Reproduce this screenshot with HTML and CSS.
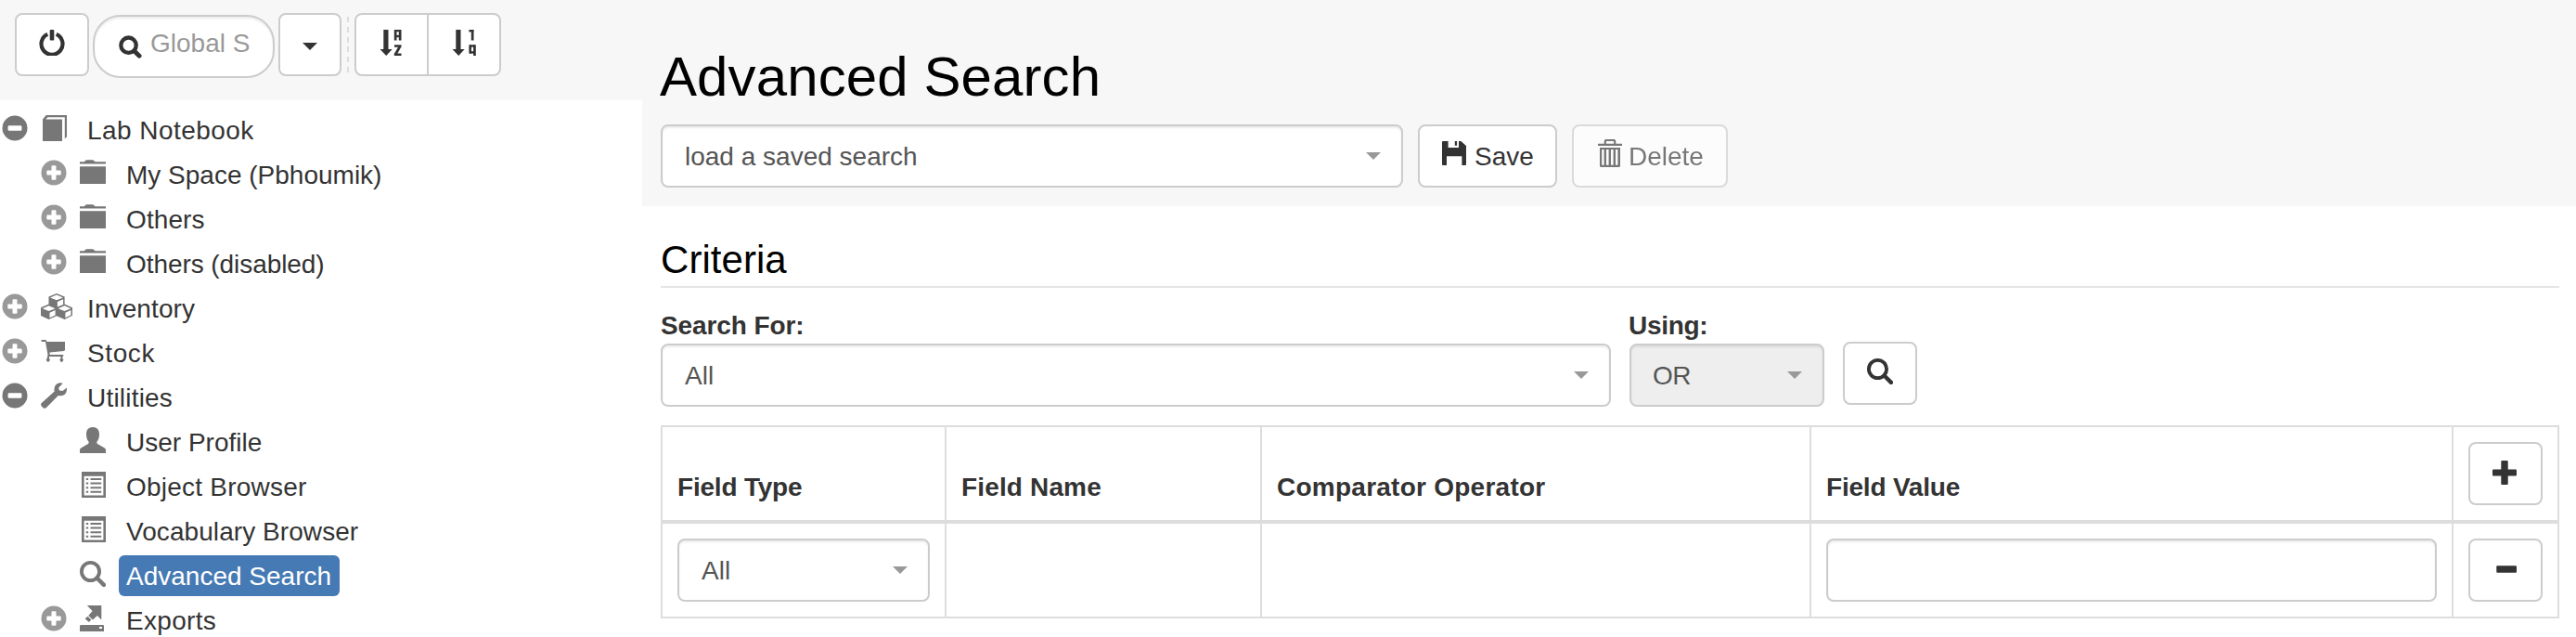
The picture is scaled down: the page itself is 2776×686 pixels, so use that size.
FILE: index.html
```html
<!DOCTYPE html>
<html lang="en">
<head>
<meta charset="utf-8">
<title>Advanced Search</title>
<link rel="stylesheet" href="styles.css">
</head>
<body>
<svg class="defs" aria-hidden="true">
  <symbol id="plus-circle" viewBox="0 0 28 28"><circle cx="14" cy="14" r="13.5" fill="#999"/><path d="M11.5 7.3q0-1 1-1h3q1 0 1 1v4.2h4.2q1 0 1 1v3q0 1-1 1h-4.2v4.2q0 1-1 1h-3q-1 0-1-1v-4.2H7.3q-1 0-1-1v-3q0-1 1-1h4.2z" fill="#fff"/></symbol>
  <symbol id="minus-circle" viewBox="0 0 28 28"><circle cx="14" cy="14" r="13.5" fill="#777"/><rect x="6.6" y="11.3" width="14.8" height="5.4" rx="1.2" fill="#fff"/></symbol>
  <symbol id="book" viewBox="0 0 28 28"><path d="M2 4.600L5.800 0H28v23.200L25.800 25.400V2.200H7.400L5.400 4.600H23V28H2z"/></symbol>
  <symbol id="folder" viewBox="0 0 28 28"><path d="M0 4.600V2.300h4.800L6.200.7Q6.800.2 7.600.2h6Q14.400.2 15 .7l1.400 1.600H28v2.300zM0 7.200h28V26H0z"/></symbol>
  <symbol id="search" viewBox="0 0 28 28"><circle cx="11.500" cy="11.500" r="9.600" fill="none" stroke="currentColor" stroke-width="3.800"/><path d="M18.500 18.500l7.400 7.400" stroke="currentColor" stroke-width="4.400" stroke-linecap="round"/></symbol>
  <symbol id="list" viewBox="0 0 28 28"><path fill-rule="evenodd" d="M2 0h26v28H2zM4.600 4.800v20.600h20.800V4.800z"/><path d="M6.800 7h2.400v2H6.800zM11.500 7h11.700v2H11.500zM6.800 11.600h2.400v2H6.800zM11.500 11.600h11.700v2H11.500zM6.800 16.200h2.400v2H6.800zM11.500 16.200h11.700v2H11.500zM6.800 20.800h2.400v2H6.800zM11.500 20.800h11.700v2H11.500z"/></symbol>
</svg>
<div class="page">
  <aside class="sidebar">
    <div class="toolbar">
      <button class="btn sq" aria-label="Log out"><svg class="ic" viewBox="0 0 28 28"><path d="M9.300 4.800A11.500 11.500 0 1 0 18.700 4.800" fill="none" stroke="currentColor" stroke-width="4.200"/><rect x="11.700" y="0" width="4.600" height="11.400" rx="1"/></svg></button>
      <div class="global-search"><svg class="ic small" viewBox="0 0 28 28"><circle cx="11.800" cy="12" r="9.200" fill="none" stroke="currentColor" stroke-width="4.800"/><path d="M18.800 19l6 5.800" stroke="currentColor" stroke-width="5.400" stroke-linecap="round"/></svg><span>Global S</span></div>
      <button class="btn dropdown" aria-label="Search options"><span class="caret dark"></span></button>
      <span class="divider"></span>
      <div class="group">
        <button class="btn sq" aria-label="Sort by name"><svg class="ic" viewBox="0 0 28 28"><path d="M5.300 0h5.200v21h4.200L8.200 28 1.500 21h3.800z"/><rect x="16.800" y="0" width="2.700" height="11.500"/><rect x="21.800" y="0" width="2.700" height="11.500"/><rect x="18" y="0" width="5" height="2.200"/><rect x="18" y="5.800" width="5" height="2.400"/><rect x="17" y="16.300" width="7.500" height="2.500"/><rect x="16.800" y="25.500" width="7.700" height="2.500"/><line x1="23" y1="18" x2="18.200" y2="26.500" stroke="currentColor" stroke-width="2.800"/></svg></button>
        <button class="btn sq" aria-label="Sort by code"><svg class="ic" viewBox="0 0 28 28"><path d="M5.300 0h5.200v21h4.200L8.200 28 1.500 21h3.800z"/><rect x="19.400" y="0" width="5" height="2.400"/><rect x="21.800" y="0" width="2.700" height="11.500"/><rect x="19.400" y="16.300" width="2.600" height="9.300"/><rect x="24.100" y="16.300" width="2.700" height="11.700"/><rect x="20" y="16.300" width="6" height="2.400"/><rect x="20" y="23.200" width="6" height="2.400"/></svg></button>
      </div>
    </div>
    <ul class="tree">
      <li><svg class="exp"><use href="#minus-circle"/></svg><svg class="ic"><use href="#book"/></svg><span class="label lab">Lab Notebook</span></li>
      <li class="l2"><svg class="exp"><use href="#plus-circle"/></svg><svg class="ic"><use href="#folder"/></svg><span class="label">My Space (Pbhoumik)</span></li>
      <li class="l2"><svg class="exp"><use href="#plus-circle"/></svg><svg class="ic"><use href="#folder"/></svg><span class="label others">Others</span></li>
      <li class="l2"><svg class="exp"><use href="#plus-circle"/></svg><svg class="ic"><use href="#folder"/></svg><span class="label disabled">Others (disabled)</span></li>
      <li><svg class="exp"><use href="#plus-circle"/></svg><svg class="ic wide" viewBox="0 0 34 28"><path fill-rule="evenodd" d="M17 0l8.600 3.400v8.200l8.400 3.600v8.600L25.700 28 17 24.200 8.600 28 0 24V15.200l8.500-3.600V3.400zM17 1.600l-6.900 2.900L17 7.300l6.900-2.800zM17.900 9v5.500l6.200-2.600V6.300zM8.600 13.300l-6.900 2.900 6.900 2.800 6.900-2.800zM9.500 20.700v5.500l6.100-2.800v-5.300zM25.500 13.300l-6.900 2.900 6.900 2.800 6.900-2.800zM26.400 20.700v5.500l6.100-2.900v-5.200z"/></svg><span class="label inv">Inventory</span></li>
      <li><svg class="exp"><use href="#plus-circle"/></svg><svg class="ic" viewBox="0 0 28 28"><path d="M.6 2H5.400L6.500 4H26v8.800q0 1-1 1.200L9.500 15.600 9.800 18H24.200v1.900h-.8v2.200a1.900 1.900 0 1 1-2 0v-2.200H9v2.200a1.900 1.900 0 1 1-2.300 0L7.500 18 5 4H.6z"/></svg><span class="label stock">Stock</span></li>
      <li><svg class="exp"><use href="#minus-circle"/></svg><svg class="ic" viewBox="0 0 28 28"><path d="M23.800.8L19.200 5.400l.7 3.200 3.600.5 4.400-3.600q.6 5.600-3.400 8-2.700 1.400-5.700.4L6.200 26.700q-1.700 2-3.600.5L.8 25.400q-1.500-1.600 0-3.300L14.700 9.600Q13.700 4.500 16.800 1.800 19.800-.8 23.800.8z"/></svg><span class="label util">Utilities</span></li>
      <li class="l2"><span class="exp"></span><svg class="ic" viewBox="0 0 28 28"><path d="M14 0c4.600 0 7 3 7 7.400 0 3-.8 6.200-2.400 8.200-.5.7-.4 1.900.4 2.300l7.800 4.500Q28 23.300 28 24.500V28H0v-3.500q0-1.200 1.200-2.100L9 17.900c.8-.4.9-1.600.4-2.300C7.800 13.600 7 10.400 7 7.400 7 3 9.400 0 14 0z"/></svg><span class="label">User Profile</span></li>
      <li class="l2"><span class="exp"></span><svg class="ic"><use href="#list"/></svg><span class="label obj">Object Browser</span></li>
      <li class="l2"><span class="exp"></span><svg class="ic"><use href="#list"/></svg><span class="label voc">Vocabulary Browser</span></li>
      <li class="l2"><span class="exp"></span><svg class="ic"><use href="#search"/></svg><span class="label active">Advanced Search</span></li>
      <li class="l2"><svg class="exp"><use href="#plus-circle"/></svg><svg class="ic" viewBox="0 0 28 28"><path d="M7.800 0h15.500v15.600l-4.400-4.500-5 4.400L9.300 11l4.300-5zM8.600 11.800l3.700 3.700-2.500 2.600-4.200-3.800z"/><path fill-rule="evenodd" d="M1.300 21h23.400q1.300 0 1.300 1.300V28H0v-5.700Q0 21 1.300 21zM21 23v2h3v-2z"/></svg><span class="label exports">Exports</span></li>
    </ul>
  </aside>
  <main class="main">
    <header class="head">
      <h1>Advanced Search</h1>
      <div class="saved">
        <div class="select saved-select"><span>load a saved search</span><span class="caret"></span></div>
        <button class="btn text save"><svg class="ic save-ic" viewBox="0 0 26 26"><path d="M1 0H6.600V6.500q0 .5.500.5H18V0h2.400L26 5v20q0 1-1 1H21.400V16.300H5V26H1q-1 0-1-1V1Q0 0 1 0z"/><rect x="13.800" y="0" width="2.300" height="4.800"/></svg><span>Save</span></button>
        <button class="btn text off"><svg class="ic trash-ic" viewBox="0 0 26 30"><path d="M7.800 5V2.400Q7.800 1 9.200 1h7.600q1.400 0 1.400 1.400V5M0 5.800h26" fill="none" stroke="currentColor" stroke-width="2.200"/><path fill-rule="evenodd" d="M2 9h22v19.500q0 1.500-1.500 1.500h-19Q2 30 2 28.500zM4.200 11v16.800h2.400V11zM9 11v16.800h2.600V11zM14 11v16.800h2.600V11zM19 11v16.800h2.400V11z"/></svg><span>Delete</span></button>
      </div>
    </header>
    <section class="body">
      <h2>Criteria</h2>
      <div class="filters">
        <div class="field for"><label>Search For:</label><div class="select"><span>All</span><span class="caret"></span></div></div>
        <div class="field using"><label>Using:</label><div class="select grey"><span>OR</span><span class="caret"></span></div></div>
        <button class="btn sq go" aria-label="Search"><svg class="ic"><use href="#search"/></svg></button>
      </div>
      <table class="criteria">
        <colgroup><col class="c1"><col class="c2"><col class="c3"><col class="c4"><col class="c5"></colgroup>
        <thead><tr><th class="ft"><span>Field Type</span></th><th class="fn"><span>Field Name</span></th><th class="co"><span>Comparator Operator</span></th><th class="fv"><span>Field Value</span></th><th class="act"><button class="btn sq" aria-label="Add"><svg class="ic" viewBox="0 0 28 28"><path d="M10.300 0h5.400q1 0 1 1v8.500H25q1 0 1 1v5q0 1-1 1h-8.300V25q0 1-1 1h-5.400q-1 0-1-1v-8.500H1q-1 0-1-1v-5q0-1 1-1h8.300V1q0-1 1-1z"/></svg></button></th></tr></thead>
        <tbody><tr><td><div class="select"><span>All</span><span class="caret"></span></div></td><td></td><td></td><td><div class="select"></div></td><td class="act"><button class="btn sq" aria-label="Remove"><svg class="ic" viewBox="0 0 28 28"><rect x="4.300" y="9.200" width="21.700" height="7.600" rx="1"/></svg></button></td></tr></tbody>
      </table>
    </section>
  </main>
</div>
</body>
</html>
```

FILE: styles.css
```css
* { box-sizing: border-box; }
body { margin: 0; background: #fff; color: #333; font: 28px/40px "Liberation Sans", Arial, sans-serif; }
.defs { position: absolute; width: 0; height: 0; }
.page { display: flex; height: 686px; overflow: hidden; }
.ic { width: 28px; height: 28px; flex: none; fill: currentColor; display: block; }
.caret { width: 0; height: 0; border: 8px solid transparent; border-top-color: #999; border-bottom: 0; flex: none; }
.caret.dark { border-top-color: #333; }

.btn { display: flex; align-items: center; justify-content: center; height: 68px; padding: 0; border: 2px solid #ccc; border-radius: 8px; background: #fff; color: #333; font: inherit; }
.btn.sq { width: 80px; flex: none; padding-bottom: 4px; }
.btn.text { justify-content: flex-start; padding: 0 0 0 24px; flex: none; }
.btn.text span { margin-top: 2px; }
.btn.save { width: 150px; }
.btn.off { width: 168px; opacity: .65; }

.sidebar { width: 692px; flex: none; }
.toolbar { display: flex; align-items: flex-start; height: 108px; padding: 14px 16px; background: #f7f7f7; }
.global-search { display: flex; align-items: center; width: 196px; height: 68px; margin: 2px 4px 0; padding: 0 0 0 26px; border: 2px solid #ccc; border-radius: 30px; background: #fff; color: #999; box-shadow: inset 0 2px 2px rgba(0,0,0,.075); overflow: hidden; white-space: nowrap; }
.global-search span { margin: -7px 0 0 9px; }
.small { width: 25px; height: 25px; color: #333; filter: blur(.6px); }
.dropdown { width: 68px; padding-top: 4px; }
.divider { width: 2px; height: 60px; margin: 4px 6px 0; background: repeating-linear-gradient(#ddd 0 6px, transparent 6px 10.800px); }
.group { display: flex; }
.group .btn:first-child { border-radius: 8px 0 0 8px; }
.group .btn:last-child { border-radius: 0 8px 8px 0; margin-left: -2px; }

.tree { list-style: none; margin: 0; padding: 8px 0 0; }
.tree li { display: flex; height: 48px; padding: 2px 0 2px 2px; }
.tree .l2 { padding-left: 44px; }
.exp { width: 28px; height: 28px; margin-top: 6px; flex: none; }
.tree .ic { margin: 6px 14px 0; color: #777; }
.tree .wide { width: 34px; margin-right: 8px; }
.label { height: 44px; padding: 1px 9px 0 8px; line-height: 44px; border-radius: 6px; white-space: nowrap; }
.active { width: 238px; background: #467ab4; color: #fff; }
.lab { letter-spacing: .45px; }
.others { letter-spacing: .1px; }
.disabled { letter-spacing: -.07px; }
.inv { letter-spacing: .1px; }
.stock { letter-spacing: .6px; }
.util { letter-spacing: .2px; }
.obj { letter-spacing: .23px; }
.voc { letter-spacing: .07px; }
.exports { letter-spacing: .3px; }

.main { flex: 1; min-width: 0; }
.head { height: 222px; padding: 50px 18px 0 20px; background: #f7f7f7; }
h1 { margin: 0 0 0 -1px; font-size: 60px; line-height: 66px; font-weight: 400; color: #000; letter-spacing: .1px; }
.saved { display: flex; gap: 16px; margin-top: 18px; }
.select { display: flex; align-items: center; justify-content: space-between; height: 68px; padding: 0 22px 0 24px; border: 2px solid #ccc; border-radius: 8px; background: #fff; color: #555; box-shadow: inset 0 2px 2px rgba(0,0,0,.075); }
.select span:first-child { margin-top: 2px; }
.grey { background: #eee; }
.grey span:first-child { margin-left: -1px; letter-spacing: -.5px; }
.saved-select { width: 800px; flex: none; }
.save-ic { width: 26px; height: 26px; margin: -6px 9px 0 0; }
.trash-ic { width: 26px; height: 30px; margin: -6px 7px 0 2px; }

.body { padding: 34px 18px 0 20px; }
h2 { margin: 0 0 30px; height: 54px; padding-top: 1px; border-bottom: 2px solid #e5e5e5; font-size: 42px; line-height: 46px; font-weight: 400; color: #000; letter-spacing: .05px; }
.filters { display: flex; gap: 20px; height: 98px; }
.field label { display: block; height: 30px; padding-top: 1px; line-height: 20px; font-weight: 700; letter-spacing: -.1px; }
.using label { margin-left: -1px; letter-spacing: -.3px; }
.for { width: 1024px; }
.using { width: 210px; }
.go { margin-top: 28px; }

.criteria { width: 2046px; margin-top: 20px; table-layout: fixed; border-collapse: separate; border-spacing: 0; border: solid #ddd; border-width: 2px 0 0 2px; }
.c1 { width: 306px; } .c2 { width: 340px; } .c3 { width: 592px; } .c4 { width: 692px; } .c5 { width: 114px; }
th, td { padding: 16px; border: solid #ddd; border-width: 0 2px 2px 0; text-align: left; }
th { height: 104px; border-bottom-width: 4px; vertical-align: bottom; }
th span { display: block; height: 39px; line-height: 40px; }
td { height: 102px; }
.act .btn { padding-bottom: 0; }
.ft { letter-spacing: -.2px; }
.fn { letter-spacing: .15px; }
.co { letter-spacing: .25px; }
.fv { letter-spacing: -.2px; }
```
